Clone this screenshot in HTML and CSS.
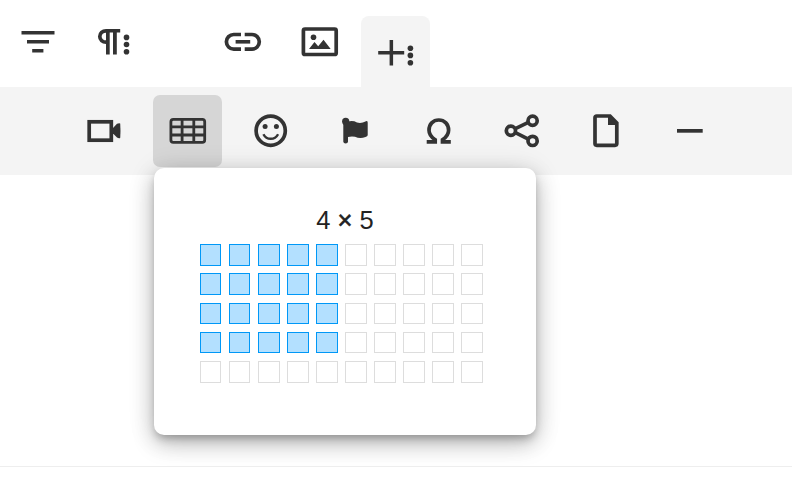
FILE: index.html
```html
<!DOCTYPE html>
<html lang="en">
<head>
<meta charset="utf-8">
<title>Editor</title>
<link rel="stylesheet" href="styles.css">
</head>
<body>
<main class="editor">
  <div class="toolbar">
    <button class="btn" aria-label="Align"><svg viewBox="3 16 69 71"><path d="M21.5 31h33v3.4h-33zM27 40h22v3.6H27zM32.2 49h11.2v3.6H32.2z"/></svg></button>
    <button class="btn" aria-label="Paragraph"><svg viewBox="80 16 69 71"><path d="M106 29h14.2v3.5h-3.4v22H113v-22h-3.3v22H106z"/><path class="line" d="M107.5 30.8H106a6.1 5.6 0 0 0 0 11.4h1.5"/><circle cx="126.5" cy="37.4" r="2.8"/><circle cx="126.5" cy="44.5" r="2.8"/><circle cx="126.5" cy="51.8" r="2.8"/></svg></button>
    <button class="btn" aria-label="Link"><svg viewBox="208 16 69 71"><path class="line" d="M241 34.5h-7.3a7.3 7.3 0 0 0 0 14.6h7.3M244.7 34.5h7.3a7.3 7.3 0 0 1 0 14.6h-7.3"/><path d="M235.6 40h14.6v3.6h-14.6z"/></svg></button>
    <button class="btn" aria-label="Image"><svg viewBox="285 16 69 71"><rect class="line" x="303.4" y="29" width="32.8" height="25.5" rx="1.6"/><circle cx="313.5" cy="37.3" r="2.8"/><path d="M309 49l5.5-7 3.7 4.3 5.3-6.6 7.2 9.3z"/></svg></button>
    <button class="btn open" aria-label="Insert"><svg viewBox="361 16 69 71"><path d="M378.2 51h11.4V40h3.5v11h11.1v3.5h-11.1v11h-3.5v-11h-11.4z"/><circle cx="410.4" cy="48.2" r="2.8"/><circle cx="410.4" cy="55.4" r="2.8"/><circle cx="410.4" cy="62.7" r="2.8"/></svg></button>
  </div>
  <div class="subbar">
    <button class="btn" aria-label="Video"><svg viewBox="69 95 69 72"><rect class="line" x="89.2" y="121.8" width="22.1" height="18.4"/><path d="M113 128l4-4.2q1.8-1 3.2-.4.6 7.2 0 14.6-1.6.6-3.2-.5l-4-4z"/></svg></button>
    <button class="btn active" aria-label="Table"><svg viewBox="153 95 69 72"><g class="line grid"><rect x="170.9" y="119.4" width="33.8" height="22.9" rx="2.4"/><path d="M182.1 119v23.5M193.8 119v23.5M171 126.8h34M171 135h34"/></g></svg></button>
    <button class="btn" aria-label="Emoticons"><svg viewBox="236 95 69 72"><circle class="line" cx="270.7" cy="130.7" r="14.6"/><circle cx="265.1" cy="126.5" r="2.5"/><circle cx="276.4" cy="126.5" r="2.5"/><path class="line thin" d="M263.4 134.2q2.4 4.6 7.3 4.6t7.4-4.6"/></svg></button>
    <button class="btn" aria-label="Font Awesome"><svg viewBox="320 95 69 72"><circle cx="345.7" cy="121.4" r="3.6"/><path d="M343.3 121.5H348Q353 120.2 357 122.4 361 123.8 366 121.2 367.6 120.8 367.7 122.4V135.2Q367.5 136.4 365.5 137 360 139.2 355 136.7 351.5 136 348 136.9V141.7Q347.8 143.4 345.7 143.5 343.5 143.4 343.3 141.7Z"/></svg></button>
    <button class="btn" aria-label="Special Characters"><svg viewBox="404 95 69 72"><path class="line" d="M426.7 141.8h8.5v-2.1c-3.8-2.5-6.2-5.3-6.2-9.5 0-6 4-10.2 9.8-10.2s9.8 4.2 9.8 10.2c0 4.2-2.4 7-6.1 9.5v2.1h8.3"/></svg></button>
    <button class="btn" aria-label="Share"><svg viewBox="487 95 69 72"><g class="line"><path d="M515.4 128.6l12.4-5.9M515.4 132.7l12.4 6.1"/><circle cx="510.9" cy="130.7" r="4.6"/><circle cx="532.6" cy="120.7" r="4.6"/><circle cx="532.6" cy="140.9" r="4.6"/></g></svg></button>
    <button class="btn" aria-label="File"><svg viewBox="571 95 69 72"><path class="line" d="M596.8 116h13.2l6.8 7v20.6q0 1.7-1.8 1.7h-18.2q-1.8 0-1.8-1.7v-25.9q0-1.7 1.8-1.7z"/><path d="M608 116h3l6 6.5v2.6h-9z"/></svg></button>
    <button class="btn" aria-label="Horizontal Line"><svg viewBox="655 95 69 72"><path d="M677 129h25.7v3.7H677z"/></svg></button>
  </div>
  <div class="content"></div>
  <section class="popup">
    <div class="size">4 <span class="times">×</span> 5</div>
    <div class="cells">
      <i class="on"></i><i class="on"></i><i class="on"></i><i class="on"></i><i class="on"></i><i></i><i></i><i></i><i></i><i></i>
      <i class="on"></i><i class="on"></i><i class="on"></i><i class="on"></i><i class="on"></i><i></i><i></i><i></i><i></i><i></i>
      <i class="on"></i><i class="on"></i><i class="on"></i><i class="on"></i><i class="on"></i><i></i><i></i><i></i><i></i><i></i>
      <i class="on"></i><i class="on"></i><i class="on"></i><i class="on"></i><i class="on"></i><i></i><i></i><i></i><i></i><i></i>
      <i></i><i></i><i></i><i></i><i></i><i></i><i></i><i></i><i></i><i></i>
    </div>
  </section>
</main>
</body>
</html>
```

FILE: styles.css
```css
* { box-sizing: border-box; }

body {
  margin: 0;
  background: #fff;
  color: #222;
  font-family: "Liberation Sans", Arial, sans-serif;
}

.editor {
  position: relative;
  height: 502px;
  overflow: hidden;
}

.toolbar {
  display: grid;
  grid-template-columns: 77px 128px 77px 76px 69px;
  height: 87px;
  padding: 16px 0 0 3px;
}

.subbar {
  display: grid;
  grid-template-columns: 84px 83px 84px 84px 83px 84px 84px 69px;
  height: 88px;
  padding: 8px 0 0 69px;
  background: #f4f4f4;
}

.btn {
  width: 69px;
  height: 72px;
  padding: 0;
  border: 0;
  border-radius: 7px;
  background: none;
}

.toolbar .btn {
  height: 71px;
}

.btn.open {
  border-radius: 8px 8px 0 0;
  background: #f4f4f4;
}

.btn.active {
  background: #d6d6d6;
}

.btn svg {
  display: block;
  width: 100%;
  height: 100%;
  fill: #333;
}

.btn .line {
  fill: none;
  stroke: #333;
  stroke-width: 3.7px;
}

.btn .grid {
  stroke-width: 2.8px;
}

.btn .thin {
  stroke-width: 2.4px;
}

.content {
  height: 292px;
  border-bottom: 1px solid #eee;
}

.popup {
  position: absolute;
  top: 168px;
  left: 154px;
  width: 382px;
  height: 267px;
  padding: 37px 46px 0;
  border-radius: 10px;
  background: #fff;
  box-shadow: 0 5px 9px -2px rgba(0, 0, 0, .26), 0 9px 22px 0 rgba(0, 0, 0, .22), 0 2px 28px 0 rgba(0, 0, 0, .12);
}

.size {
  height: 39px;
  font-size: 25.5px;
  line-height: 30px;
  text-align: center;
}

.times {
  -webkit-text-stroke: .6px #222;
}

.cells {
  display: grid;
  grid-template-columns: repeat(10, 29px);
  grid-template-rows: 29px 30px 29px 29px 22px;
}

.cells i {
  width: 22px;
  height: 22px;
  border: 1px solid #ddd;
}

.cells i:nth-child(10n + 1),
.cells i:nth-child(10n + 2) {
  width: 21px;
}

.cells i:nth-child(n + 21):nth-child(-n + 40) {
  height: 21px;
}

.cells .on {
  border-color: #0098f7;
  background: #b3e0ff;
}
```
